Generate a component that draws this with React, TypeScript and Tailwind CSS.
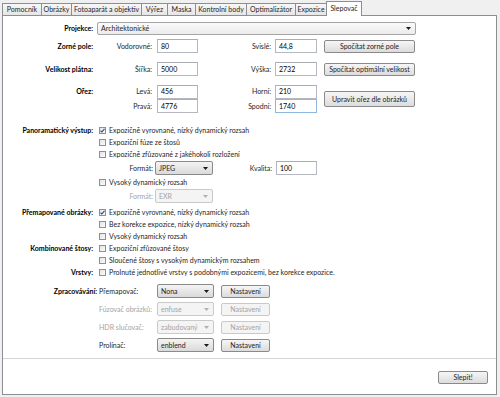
import type { ReactNode } from 'react'

const tabs = [
  { name: 'Pomocník', w: 'w-[40px]' },
  { name: 'Obrázky', w: 'w-[31px]' },
  { name: 'Fotoaparát a objektiv', w: 'w-[71px]' },
  { name: 'Výřez', w: 'w-[27px]' },
  { name: 'Maska', w: 'w-[29px]' },
  { name: 'Kontrolní body', w: 'w-[52px]' },
  { name: 'Optimalizátor', w: 'w-[50px]' },
  { name: 'Expozice', w: 'w-[32px]' },
]

function Label({ children, w = 'w-[90px]', h = 'h-[12px]' }: { children: ReactNode; w?: string; h?: string }) {
  return (
    <div className={`${w} ${h} shrink-0 flex items-center justify-end font-bold text-black`}>{children}</div>
  )
}

function SubLabel({ children, w, disabled }: { children: ReactNode; w: string; disabled?: boolean }) {
  return (
    <div className={`${w} shrink-0 text-right ${disabled ? 'text-[#a3a3a3]' : 'text-[#1e1e1e]'}`}>{children}</div>
  )
}

function Input({ value, w = 'w-[41px]', focus }: { value: string; w?: string; focus?: boolean }) {
  return (
    <div
      className={`${w} h-[14px] shrink-0 border bg-white pl-[3px] flex items-center ${
        focus ? 'border-[#8fb8e0]' : 'border-[#b5b8c0] border-t-[#abadb3]'
      }`}
    >
      {value}
    </div>
  )
}

function Button({ children, w, disabled }: { children: ReactNode; w: string; disabled?: boolean }) {
  return (
    <div
      className={`${w} h-[13px] shrink-0 rounded-[2px] border flex items-center justify-center ${
        disabled
          ? 'border-[#c9c9c9] bg-[#f4f4f4] text-[#a3a3a3]'
          : 'border-[#8a8a8a] bg-gradient-to-b from-[#f6f6f6] to-[#dcdcdc] text-[#1e1e1e]'
      }`}
    >
      {children}
    </div>
  )
}

function Select({ value, w, disabled }: { value: string; w: string; disabled?: boolean }) {
  return (
    <div
      className={`${w} h-[14px] shrink-0 rounded-[2px] border flex items-center pl-[3px] pr-[4px] ${
        disabled
          ? 'border-[#cacaca] bg-[#f4f4f4] text-[#a3a3a3]'
          : 'border-[#8a8a8a] bg-gradient-to-b from-[#f4f4f4] to-[#dadada] text-[#1e1e1e]'
      }`}
    >
      <span className="flex-1">{value}</span>
      <svg width="5" height="3" viewBox="0 0 5 3">
        <path d="M0 0h5L2.5 3z" fill={disabled ? '#b0b0b0' : '#1a1a1a'} />
      </svg>
    </div>
  )
}

function Check({ label, checked }: { label: string; checked?: boolean }) {
  return (
    <div className="h-[12px] flex items-center">
      <div className="w-[7px] h-[7px] ml-[2px] shrink-0 border border-[#8e8f8f] bg-gradient-to-br from-[#e4e4e4] to-[#fbfbfb] flex items-center justify-center">
        {checked && (
          <svg width="5" height="5" viewBox="0 0 5 5">
            <path d="M0.5 2.6L1.9 4 4.5 0.8" stroke="#2a4a8a" strokeWidth="1.1" fill="none" />
          </svg>
        )}
      </div>
      <span className="ml-[3px] text-[#1e1e1e]">{label}</span>
    </div>
  )
}

export default function App() {
  return (
    <div className="w-[500px] h-[397px] bg-[#f0f0f0] font-['Lato',sans-serif] text-[7px] leading-none overflow-hidden">
      {/* tab strip */}
      <div className="flex items-end h-[15px] pl-[2px]">
        {tabs.map((t) => (
          <div
            key={t.name}
            className={`${t.w} h-[12px] -mr-px border border-b-0 border-[#8c8e94] bg-gradient-to-b from-[#f7f7f7] to-[#e6e6e6] flex items-center justify-center text-[#1e1e1e]`}
          >
            {t.name}
          </div>
        ))}
        <div className="relative z-10 w-[36px] h-[15px] -mb-px border border-b-0 border-[#8c8e94] bg-white flex items-start pt-[3px] justify-center text-[#1e1e1e]">
          Slepovač
        </div>
      </div>

      <div className="ml-[2px] w-[495px] h-[380px] border border-[#8c8e94] bg-white flex flex-col">
        {/* Projekce */}
        <div className="mt-[6px] h-[13px] flex items-center">
          <Label>Projekce:</Label>
          <div className="ml-[4px]">
            <div className="w-[319px] h-[13px] rounded-[2px] border border-[#a5a5a5] bg-gradient-to-b from-[#fafafa] to-[#ececec] flex items-center pl-[3px] pr-[4px]">
              <span className="flex-1 text-[#1e1e1e]">Architektonické</span>
              <svg width="5" height="3" viewBox="0 0 5 3">
                <path d="M0 0h5L2.5 3z" fill="#1a1a1a" />
              </svg>
            </div>
          </div>
        </div>

        {/* Zorné pole */}
        <div className="mt-[4px] h-[14px] flex items-center">
          <Label>Zorné pole:</Label>
          <SubLabel w="w-[59px]">Vodorovné:</SubLabel>
          <div className="ml-[5px]"><Input value="80" /></div>
          <SubLabel w="w-[73px]">Svislé:</SubLabel>
          <div className="ml-[4px]"><Input value="44,8" w="w-[42px]" /></div>
          <div className="ml-[7px]"><Button w="w-[91px]">Spočítat zorné pole</Button></div>
        </div>

        {/* Velikost plátna */}
        <div className="mt-[9px] h-[14px] flex items-center">
          <Label>Velikost plátna:</Label>
          <SubLabel w="w-[59px]">Šířka:</SubLabel>
          <div className="ml-[5px]"><Input value="5000" /></div>
          <SubLabel w="w-[73px]">Výška:</SubLabel>
          <div className="ml-[4px]"><Input value="2732" w="w-[42px]" /></div>
          <div className="ml-[7px]"><Button w="w-[91px]">Spočítat optimální velikost</Button></div>
        </div>

        {/* Ořez */}
        <div className="mt-[9px] flex">
          <div className="flex flex-col">
            <div className="h-[13px] flex items-center">
              <Label>Ořez:</Label>
              <SubLabel w="w-[59px]">Levá:</SubLabel>
              <div className="ml-[5px]"><Input value="456" /></div>
              <SubLabel w="w-[73px]">Horní:</SubLabel>
              <div className="ml-[4px]"><Input value="210" w="w-[42px]" /></div>
            </div>
            <div className="mt-[1px] h-[14px] flex items-center">
              <div className="w-[90px]" />
              <SubLabel w="w-[59px]">Pravá:</SubLabel>
              <div className="ml-[5px]"><Input value="4776" /></div>
              <SubLabel w="w-[73px]">Spodní:</SubLabel>
              <div className="ml-[4px]"><Input value="1740" w="w-[42px]" focus /></div>
            </div>
          </div>
          <div className="ml-[7px] flex items-center">
            <div className="w-[91px] h-[16px] shrink-0 rounded-[2px] border border-[#8a8a8a] bg-gradient-to-b from-[#f6f6f6] to-[#dcdcdc] flex items-center justify-center text-[#1e1e1e]">
              Upravit ořez dle obrázků
            </div>
          </div>
        </div>

        {/* Panoramatický výstup */}
        <div className="mt-[11px] flex">
          <Label>Panoramatický výstup:</Label>
          <div className="ml-[4px] flex flex-col">
            <Check label="Expozičně vyrovnané, nízký dynamický rozsah" checked />
            <Check label="Expoziční fúze ze štosů" />
            <Check label="Expozičně zfůzované z jakéhokoli rozložení" />
            <div className="mt-[1px] h-[14px] flex items-center">
              <SubLabel w="w-[56px]">Formát:</SubLabel>
              <div className="ml-[2px]"><Select value="JPEG" w="w-[58px]" /></div>
              <SubLabel w="w-[59px]">Kvalita:</SubLabel>
              <div className="ml-[4px]"><Input value="100" /></div>
            </div>
            <div className="mt-[1px]"><Check label="Vysoký dynamický rozsah" /></div>
            <div className="mt-[1px] h-[14px] flex items-center">
              <SubLabel w="w-[56px]" disabled>Formát:</SubLabel>
              <div className="ml-[2px]"><Select value="EXR" w="w-[58px]" disabled /></div>
            </div>
          </div>
        </div>

        {/* Přemapované obrázky */}
        <div className="mt-[3px] flex">
          <Label>Přemapované obrázky:</Label>
          <div className="ml-[4px] flex flex-col">
            <Check label="Expozičně vyrovnané, nízký dynamický rozsah" checked />
            <Check label="Bez korekce expozice, nízký dynamický rozsah" />
            <Check label="Vysoký dynamický rozsah" />
          </div>
        </div>

        {/* Kombinované štosy */}
        <div className="flex">
          <Label>Kombinované štosy:</Label>
          <div className="ml-[4px] flex flex-col">
            <Check label="Expoziční zfůzované štosy" />
            <Check label="Sloučené štosy s vysokým dynamickým rozsahem" />
          </div>
        </div>

        {/* Vrstvy */}
        <div className="flex">
          <Label>Vrstvy:</Label>
          <div className="ml-[4px] flex flex-col">
            <Check label="Prolnuté jednotlivé vrstvy s podobnými expozicemi, bez korekce expozice." />
          </div>
        </div>

        {/* Zpracovávání */}
        <div className="mt-[6px] flex">
          <Label w="w-[94px]" h="h-[14px]">Zpracovávání:</Label>
          <div className="ml-[2px] flex flex-col gap-[4px]">
            <div className="h-[14px] flex items-center">
              <div className="w-[58px] text-[#1e1e1e]">Přemapovač:</div>
              <Select value="Nona" w="w-[57px]" />
              <div className="ml-[7px]"><Button w="w-[49px]">Nastavení</Button></div>
            </div>
            <div className="h-[14px] flex items-center">
              <div className="w-[58px] text-[#a3a3a3]">Fúzovač obrázků:</div>
              <Select value="enfuse" w="w-[57px]" disabled />
              <div className="ml-[7px]"><Button w="w-[49px]" disabled>Nastavení</Button></div>
            </div>
            <div className="h-[14px] flex items-center">
              <div className="w-[58px] text-[#a3a3a3]">HDR slučovač:</div>
              <Select value="zabudovaný" w="w-[57px]" disabled />
              <div className="ml-[7px]"><Button w="w-[49px]" disabled>Nastavení</Button></div>
            </div>
            <div className="h-[14px] flex items-center">
              <div className="w-[58px] text-[#1e1e1e]">Prolínač:</div>
              <Select value="enblend" w="w-[57px]" />
              <div className="ml-[7px]"><Button w="w-[49px]">Nastavení</Button></div>
            </div>
          </div>
        </div>

        <div className="mt-[6px] h-px bg-[#d5d5d5]" />

        <div className="mt-[12px] flex justify-end pr-[8px]">
          <Button w="w-[50px]">Slepit!</Button>
        </div>
      </div>
    </div>
  )
}
